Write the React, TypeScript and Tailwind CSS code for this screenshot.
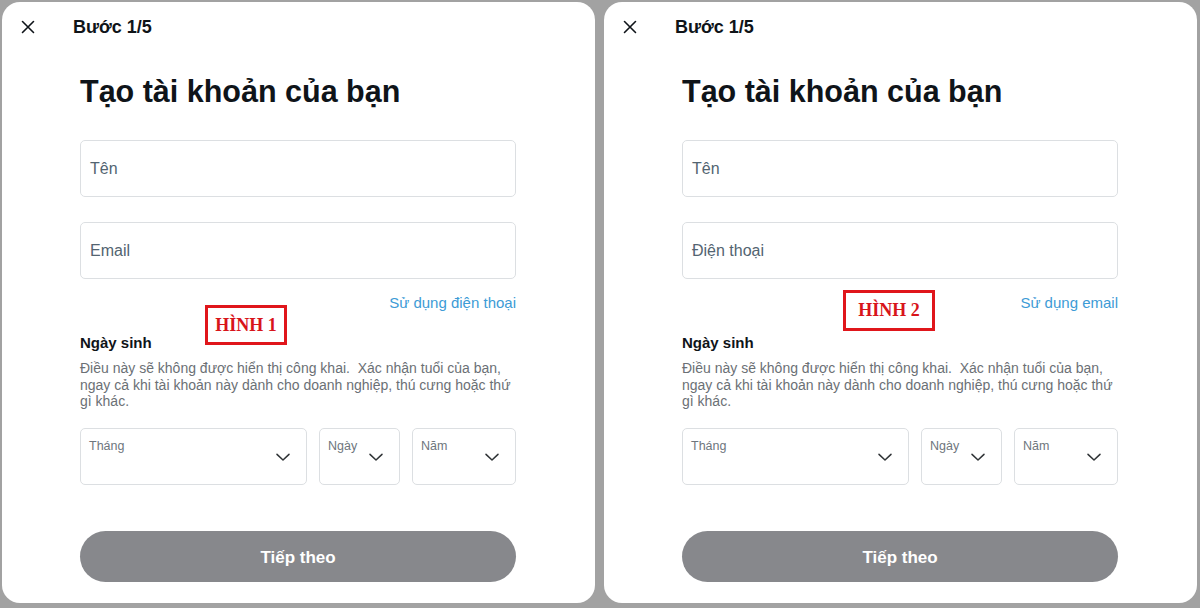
import React from 'react';

type PanelProps = {
    secondField: string;
    switchLink: string;
    badge: string;
    badgeClass: string;
};

function Chevron() {
    return (
        <svg width="18" height="18" viewBox="0 0 24 24" fill="none" stroke="#2f3336" strokeWidth="2" strokeLinecap="round" strokeLinejoin="round">
            <path d="M4 8.5l8 7.5 8-7.5" />
        </svg>
    );
}

function SelectBox({ label, className }: { label: string; className: string }) {
    return (
        <div className={`relative h-[57px] rounded-[5px] border border-[#dcdfe2] ${className}`}>
            <span className="absolute left-[8px] top-[8px] text-[12.5px] text-[#6e767d]">{label}</span>
            <span className="absolute right-[14px] top-[19px]"><Chevron /></span>
        </div>
    );
}

function Panel({ secondField, switchLink, badge, badgeClass }: PanelProps) {
    return (
        <div className="relative w-[593px] h-full bg-white rounded-[18px] overflow-hidden">
            {/* header */}
            <div className="h-[50px] flex items-center pl-[19px]">
                <svg width="14" height="14" viewBox="0 0 14 14" stroke="#0f1419" strokeWidth="1.6" strokeLinecap="round">
                    <path d="M1.5 1.5l11 11M12.5 1.5l-11 11" />
                </svg>
                <span className="ml-[38px] text-[18px] font-bold text-[#0f1419]">Bước 1/5</span>
            </div>

            <div className="pl-[78px] pr-[79px]">
                <h1 className="mt-[21px] text-[30.5px] leading-[36px] font-bold text-[#0f1419]">Tạo tài khoản của bạn</h1>

                <div className="mt-[31px] h-[57px] rounded-[5px] border border-[#dcdfe2] flex items-center px-[9px] text-[16px] text-[#536471]">Tên</div>
                <div className="mt-[25px] h-[57px] rounded-[5px] border border-[#dcdfe2] flex items-center px-[9px] text-[16px] text-[#536471]">{secondField}</div>

                <div className="mt-[14px] text-right text-[15px] leading-[20px] text-[#3d9bd6]">{switchLink}</div>

                <div className="mt-[20px] text-[15px] leading-[20px] font-bold text-[#0f1419]">Ngày sinh</div>
                <p className="mt-[7px] text-[14px] leading-[16.5px] text-[#6b7075]">
                    Điều này sẽ không được hiển thị công khai.&nbsp; Xác nhận tuổi của bạn, ngay cả khi tài khoản này dành cho doanh nghiệp, thú cưng hoặc thứ gì khác.
                </p>

                <div className="mt-[18px] flex gap-[12px]">
                    <SelectBox label="Tháng" className="w-[227px]" />
                    <SelectBox label="Ngày" className="w-[81px]" />
                    <SelectBox label="Năm" className="w-[104px]" />
                </div>

                <button className="mt-[46px] w-full h-[51px] pt-[3px] rounded-full bg-[#87888c] text-white text-[17px] font-bold">Tiếp theo</button>
            </div>

            <div className={`absolute border-[3px] border-[#e0161b] flex items-center justify-center text-[#d8141a] font-bold text-[18px] ${badgeClass}`} style={{ fontFamily: '"Liberation Serif", "DejaVu Serif", serif' }}>
                {badge}
            </div>
        </div>
    );
}

export default function App() {
    return (
        <div className="w-[1200px] h-[608px] bg-[#a2a2a2] flex pt-[2px] pb-[5px] pl-[2px] gap-[9px] overflow-hidden" style={{ fontFamily: '"Liberation Sans", Arial, sans-serif' }}>
            <Panel secondField="Email" switchLink="Sử dụng điện thoại" badge="HÌNH 1" badgeClass="left-[203px] top-[303px] w-[82px] h-[40px]" />
            <Panel secondField="Điện thoại" switchLink="Sử dụng email" badge="HÌNH 2" badgeClass="left-[239px] top-[288px] w-[92px] h-[41px]" />
        </div>
    );
}
